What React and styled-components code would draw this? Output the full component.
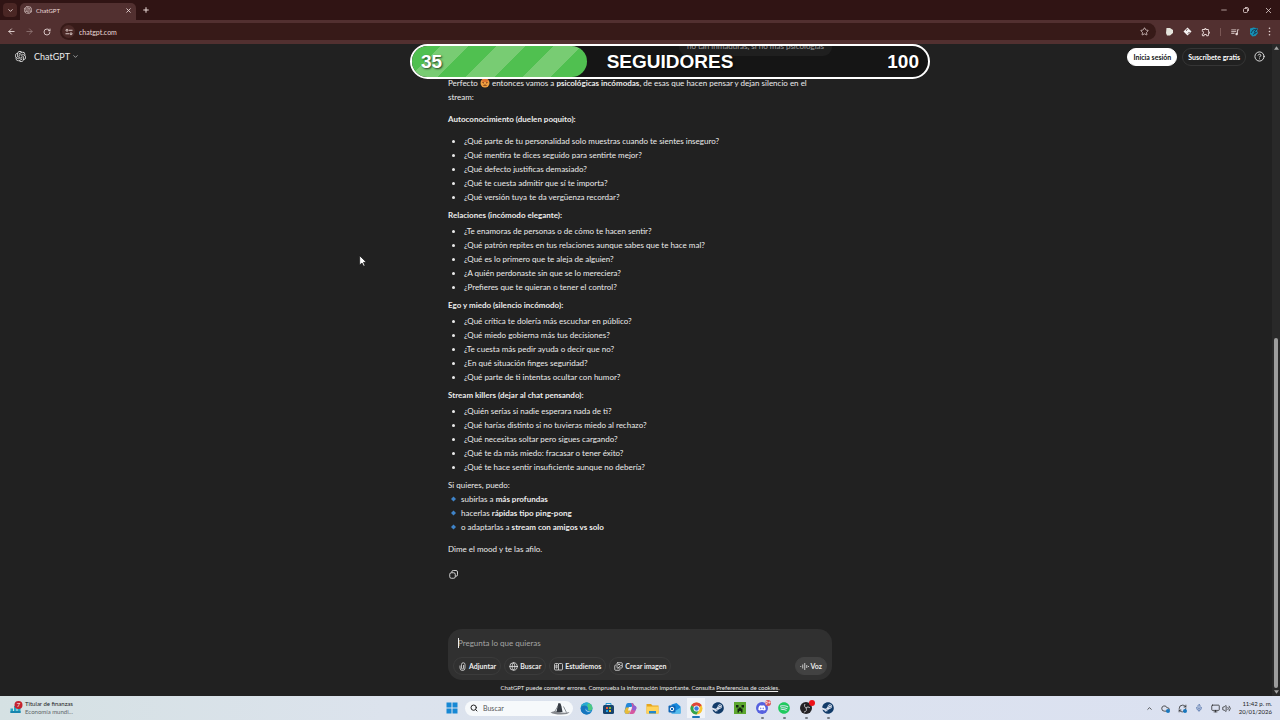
import React from "react";
import styled, { createGlobalStyle } from "styled-components";
import {
  ArrowLeft,
  ArrowRight,
  ChevronDown,
  ChevronUp,
  CircleHelp,
  Cloud,
  Globe,
  Images,
  Mic,
  Minus,
  Monitor,
  Plus,
  RefreshCw,
  RotateCw,
  Search,
  Star,
  Volume2,
  X,
} from "lucide-react";
import { FaDiscord, FaSpotify, FaSteam } from "react-icons/fa";
import { MdOutlineExtension, MdOutlineQueueMusic } from "react-icons/md";
import { SiOpenai } from "react-icons/si";

const firstSection = {
  title: "Autoconocimiento (duelen poquito):",
  items: [
    "¿Qué parte de tu personalidad solo muestras cuando te sientes inseguro?",
    "¿Qué mentira te dices seguido para sentirte mejor?",
    "¿Qué defecto justificas demasiado?",
    "¿Qué te cuesta admitir que sí te importa?",
    "¿Qué versión tuya te da vergüenza recordar?",
  ],
};

const sections = [
  {
    title: "Relaciones (incómodo elegante):",
    items: [
      "¿Te enamoras de personas o de cómo te hacen sentir?",
      "¿Qué patrón repites en tus relaciones aunque sabes que te hace mal?",
      "¿Qué es lo primero que te aleja de alguien?",
      "¿A quién perdonaste sin que se lo mereciera?",
      "¿Prefieres que te quieran o tener el control?",
    ],
  },
  {
    title: "Ego y miedo (silencio incómodo):",
    items: [
      "¿Qué crítica te dolería más escuchar en público?",
      "¿Qué miedo gobierna más tus decisiones?",
      "¿Te cuesta más pedir ayuda o decir que no?",
      "¿En qué situación finges seguridad?",
      "¿Qué parte de ti intentas ocultar con humor?",
    ],
  },
  {
    title: "Stream killers (dejar al chat pensando):",
    items: [
      "¿Quién serías si nadie esperara nada de ti?",
      "¿Qué harías distinto si no tuvieras miedo al rechazo?",
      "¿Qué necesitas soltar pero sigues cargando?",
      "¿Qué te da más miedo: fracasar o tener éxito?",
      "¿Qué te hace sentir insuficiente aunque no debería?",
    ],
  },
];

const offers = [
  ["subirlas a ", "más profundas"],
  ["hacerlas ", "rápidas tipo ping-pong"],
  ["o adaptarlas a ", "stream con amigos vs solo"],
];

function App() {
  return (
    <>
      <GlobalStyle />
      <Screen>
        <TabStrip />
        <Toolbar />
        <ChatPage />
        <Taskbar />
        <FollowerGoal />
        <Cursor />
      </Screen>
    </>
  );
}

// Browser tabs
function TabStrip() {
  return (
    <TabBar>
      <TabSearch aria-label="Buscar pestañas">
        <ChevronDown size={7} strokeWidth={3} />
      </TabSearch>
      <Tab>
        <SiOpenai size={8} />
        <TabTitle>ChatGPT</TabTitle>
        <PlainButton aria-label="Cerrar pestaña">
          <X size={7} strokeWidth={3} />
        </PlainButton>
      </Tab>
      <PlainButton aria-label="Nueva pestaña">
        <Plus size={8} strokeWidth={3} />
      </PlainButton>
      <WindowControls>
        <PlainButton aria-label="Minimizar">
          <Minus size={8} strokeWidth={2} />
        </PlainButton>
        <PlainButton aria-label="Restaurar">
          <svg width="6" height="6" viewBox="0 0 12 12" fill="none" stroke="currentColor" strokeWidth="1.6">
            <rect x="1" y="3" width="8" height="8" rx="2" />
            <path d="M4 1h4a3 3 0 0 1 3 3v4" />
          </svg>
        </PlainButton>
        <PlainButton aria-label="Cerrar">
          <X size={9} strokeWidth={2} />
        </PlainButton>
      </WindowControls>
    </TabBar>
  );
}

// Navigation, address and extensions
function Toolbar() {
  return (
    <ToolBar>
      <NavButtons>
        <PlainButton aria-label="Atrás">
          <ArrowLeft size={9} strokeWidth={2.4} />
        </PlainButton>
        <PlainButton aria-label="Adelante" $dim>
          <ArrowRight size={9} strokeWidth={2.4} />
        </PlainButton>
        <PlainButton aria-label="Recargar">
          <RotateCw size={8} strokeWidth={2.6} />
        </PlainButton>
      </NavButtons>
      <AddressBar>
        <SiteInfo aria-label="Información del sitio">
          <svg width="8" height="8" viewBox="0 0 16 16" fill="none" stroke="currentColor" strokeWidth="1.8">
            <circle cx="4" cy="4.5" r="2" />
            <path d="M8 4.5h7M1 11.5h7" />
            <circle cx="12" cy="11.5" r="2" />
          </svg>
        </SiteInfo>
        <AddressInput aria-label="Dirección" defaultValue="chatgpt.com" />
        <PlainButton aria-label="Favoritos">
          <Star size={9} strokeWidth={2} />
        </PlainButton>
      </AddressBar>
      <Extensions>
        <svg width="9" height="9" viewBox="0 0 18 18" fill="#e5e4dc">
          <path d="M3 2h7l6 4v6l-6 5H4L2 12z" />
        </svg>
        <svg width="9" height="9" viewBox="0 0 18 18" fill="#f5f2f2">
          <path d="M9 1l8 8-8 8-8-8z" />
          <path d="M6 7l3-2M10 13l3-3" stroke="#4b2a2a" strokeWidth="2" />
        </svg>
        <MdOutlineExtension size={10} />
        <Divider />
        <MdOutlineQueueMusic size={10} />
        <svg width="10" height="10" viewBox="0 0 20 20">
          <path d="M2 3l7-2 9 2-2 5 2 4-5 6-6 1-5-5z" fill="#1590b4" />
          <path d="M4 12l4-6 8-2-6 6 5 1-7 4" fill="none" stroke="#163d57" strokeWidth="2" />
        </svg>
        <svg width="3" height="9" viewBox="0 0 3 9" fill="currentColor">
          <circle cx="1.5" cy="1.3" r=".8" />
          <circle cx="1.5" cy="4.5" r=".8" />
          <circle cx="1.5" cy="7.7" r=".8" />
        </svg>
      </Extensions>
    </ToolBar>
  );
}

function Section({ title, items, spaced }) {
  return (
    <>
      <SectionTitle $spaced={spaced}>{title}</SectionTitle>
      <Questions>
        {items.map((item) => (
          <li key={item}>{item}</li>
        ))}
      </Questions>
    </>
  );
}

function ChatPage() {
  return (
    <Page>
      <Header>
        <ModelButton>
          <SiOpenai size={11} />
          <span>ChatGPT</span>
          <ChevronDown size={7} strokeWidth={2} />
        </ModelButton>
        <Account>
          <Pill $light>Inicia sesión</Pill>
          <Pill>Suscríbete gratis</Pill>
          <HelpButton aria-label="Ayuda">
            <CircleHelp size={11} strokeWidth={2} />
          </HelpButton>
        </Account>
      </Header>

      <Thread>
        <UserMessage>no tan inmaduras, si no mas psicologías</UserMessage>
        <Paragraph>
          Perfecto <Face /> entonces vamos a <b>psicológicas incómodas</b>, de esas que hacen
          pensar y dejan silencio en el stream:
        </Paragraph>
        <Section {...firstSection} spaced />
        {sections.map((section) => (
          <Section key={section.title} {...section} />
        ))}
        <Closing>
          Si quieres, puedo:
          {offers.map(([text, strong]) => (
            <Offer key={strong}>
              <svg width="11" height="8" viewBox="0 0 11 8">
                <path d="M5.500 1.500l2.500 2.500-2.500 2.500L3 4z" fill="#3f83c8" />
              </svg>
              <span>
                {text}
                <b>{strong}</b>
              </span>
            </Offer>
          ))}
        </Closing>
        <Paragraph>Dime el mood y te las afilo.</Paragraph>
        <CopyButton aria-label="Copiar">
          <svg width="9" height="9" viewBox="0 0 18 18" fill="none" stroke="currentColor" strokeWidth="1.7">
            <rect x="1.500" y="5.500" width="11" height="11" rx="3" />
            <path d="M5.500 5V4a3 3 0 0 1 3-3H14a3 3 0 0 1 3 3v5.500a3 3 0 0 1-3 3h-1" />
          </svg>
        </CopyButton>
      </Thread>

      <Composer>
        <Prompt aria-label="Mensaje" placeholder="Pregunta lo que quieras" />
        <Caret />
        <Actions>
          <ActionButton>
            <svg width="9" height="9" viewBox="0 0 18 18" fill="none" stroke="currentColor" strokeWidth="1.5">
              <path d="M4 7v5a5 5 0 0 0 10 0V5a3.500 3.500 0 0 0-7 0v7a2 2 0 0 0 4 0V6" />
            </svg>
            Adjuntar
          </ActionButton>
          <ActionButton>
            <Globe size={9} /> Buscar
          </ActionButton>
          <ActionButton>
            <svg width="9" height="9" viewBox="0 0 18 18" fill="none" stroke="currentColor" strokeWidth="1.5">
              <path d="M9 4v12H3a2 2 0 0 1-2-2V5a2 2 0 0 1 2-2h4q2 0 2 2 0-2 2-2h4a2 2 0 0 1 2 2v9a2 2 0 0 1-2 2H9" />
              <path d="M4 6h2v6H4z" />
            </svg>
            Estudiemos
          </ActionButton>
          <ActionButton>
            <Images size={9} /> Crear imagen
          </ActionButton>
          <ActionButton $filled>
            <svg width="9" height="9" viewBox="0 0 18 18" stroke="currentColor" strokeWidth="1.6">
              <path d="M1.500 8v2M5.500 5v8M9.500 2v14M13.500 6v6M17 8v2" />
            </svg>
            Voz
          </ActionButton>
        </Actions>
      </Composer>
      <Disclaimer>
        ChatGPT puede cometer errores. Comprueba la información importante. Consulta{" "}
        <a href="#cookies">Preferencias de cookies</a>.
      </Disclaimer>

      <ScrollTrack>
        <ScrollArrow viewBox="0 0 6 4">
          <path d="M3 0l3 4H0z" />
        </ScrollArrow>
        <ScrollThumb />
        <ScrollArrow viewBox="0 0 6 4">
          <path d="M0 0h6L3 4z" />
        </ScrollArrow>
      </ScrollTrack>
    </Page>
  );
}

function Face() {
  return (
    <FaceIcon viewBox="0 0 20 20">
      <circle cx="10" cy="10" r="9" fill="#f0a040" />
      <path d="M3 5a9 9 0 0 1 14 0l-3 3H6z" fill="#dd7430" />
      <path d="M5 9l3 1M15 9l-3 1M7 15q3-2 6 0" stroke="#6d2f15" strokeWidth="2" fill="none" />
    </FaceIcon>
  );
}

// Stream overlay with the follower goal
function FollowerGoal() {
  return (
    <Goal>
      <GoalFill />
      <GoalText>35</GoalText>
      <GoalText>SEGUIDORES</GoalText>
      <GoalText>100</GoalText>
    </Goal>
  );
}

function Cursor() {
  return (
    <Pointer viewBox="0 0 12 18">
      <path d="M1 1v14l3.500-3 2.500 5 2-1-2.300-5H11z" fill="#fff" stroke="#111" />
    </Pointer>
  );
}

// Windows taskbar
function Taskbar() {
  return (
    <TaskBar>
      <News>
        <svg width="14" height="14" viewBox="0 0 28 28">
          <path d="M3 15h5v9H3zM10 10h5v14h-5zM17 14h6v10h-6z" fill="#25a7c4" />
          <path d="M3 20h20v4H3z" fill="#1785ae" />
          <circle cx="19" cy="8" r="8" fill="#c4242f" />
          <text x="19" y="12" fontSize="12" textAnchor="middle" fill="#fff">7</text>
        </svg>
        <NewsText>
          <span>Titular de finanzas</span>
          <small>Economía mundi...</small>
        </NewsText>
      </News>
      <Apps>
        <AppButton aria-label="Inicio">
          <svg width="12" height="12" viewBox="0 0 24 24" fill="#1688d4">
            <path d="M1 1h10v10H1zM13 1h10v10H13zM1 13h10v10H1zM13 13h10v10H13z" />
          </svg>
        </AppButton>
        <SearchBox>
          <Search size={8} strokeWidth={3} />
          <input aria-label="Buscar" placeholder="Buscar" />
          <svg width="20" height="13" viewBox="0 0 40 26">
            <path d="M1 21q9-4 18-1t20 0q-2 5-17 5-14 0-21-4z" fill="#85888d" />
            <path d="M13 20l2-11 2-7 4 1 2 6 2 11z" fill="#333941" />
            <path d="M9 20l7-12M27 9l6 12" stroke="#6b7178" strokeWidth="1.500" />
          </svg>
        </SearchBox>
        <AppButton aria-label="Edge">
          <svg width="13" height="13" viewBox="0 0 26 26">
            <circle cx="13" cy="13" r="12" fill="#1684cf" />
            <path d="M2 9C6-2 24-1 25 12c0 6-8 7-9 3 2-8-9-9-14-6z" fill="#4bc983" />
            <path d="M2 9C5 0 15-1 20 3c-6-1-6 3-4 8-4-5-10-5-14-2z" fill="#27a9d6" />
            <path d="M3 9c7-5 13 0 12 4-5-3-7 3-2 7 4 3 8 2 10 0-4 7-17 7-21-3z" fill="#1675bd" />
            <path d="M12 13c-1 4 4 7 11 5-5 3-14 1-11-5z" fill="#dce5ee" />
          </svg>
        </AppButton>
        <AppButton aria-label="Microsoft Store">
          <svg width="13" height="13" viewBox="0 0 26 26">
            <path d="M8 7V3h10v4" fill="none" stroke="#2394cf" strokeWidth="2" />
            <rect x="2" y="6" width="22" height="18" rx="3" fill="#18446f" />
            <path d="M8 10h4v4H8z" fill="#ee5a35" />
            <path d="M14 10h4v4h-4z" fill="#82b92e" />
            <path d="M8 16h4v4H8z" fill="#22a4e7" />
            <path d="M14 16h4v4h-4z" fill="#f5b721" />
          </svg>
        </AppButton>
        <AppButton aria-label="Copilot">
          <svg width="13" height="13" viewBox="0 0 26 26">
            <path d="M8 2h8q3 0 4 4l1 3h-6l-4 12q-1 3-5 3-5 0-5-6l3-12q1-4 4-4z" fill="#2387d9" />
            <path d="M4 11l-3 7q0 6 5 6t6-5l2-8z" fill="#e8bb3a" />
            <path d="M16 2q3 0 4 5h1q4 1 4 5l-3 8q-1 4-5 4H9q3-1 4-5l3-9q1-4-2-8z" fill="#d657a0" />
            <path d="M18 7h3q4 1 4 5l-2 5-7-1z" fill="#8b62d4" />
            <path d="M10 10h6l-2 7H8z" fill="#eef1f5" />
          </svg>
        </AppButton>
        <AppButton aria-label="Explorador de archivos">
          <svg width="13" height="13" viewBox="0 0 26 26">
            <path d="M1 4h9l3 3h12v16H1z" fill="#e5a51d" />
            <path d="M1 9h24v14H1z" fill="#ffd35b" />
            <path d="M6 18h14v5H6z" fill="#2286cb" />
          </svg>
        </AppButton>
        <AppButton aria-label="Outlook">
          <svg width="13" height="13" viewBox="0 0 26 26">
            <path d="M7 5l10-3 8 7v14H7z" fill="#1789dc" />
            <path d="M8 12l8 5 9-6v12H8z" fill="#53bced" />
            <rect x="1" y="7" width="14" height="14" rx="2" fill="#0d63b3" />
            <circle cx="8" cy="14" r="3.500" fill="none" stroke="#fff" strokeWidth="2" />
          </svg>
        </AppButton>
        <AppButton aria-label="Chrome" $active>
          <svg width="13" height="13" viewBox="0 0 26 26">
            <circle cx="13" cy="13" r="12" fill="#f7c634" />
            <path d="M13 13L2.600 7A12 12 0 0 1 23.400 7z" fill="#df453a" />
            <path d="M13 13L2.600 7A12 12 0 0 0 13 25l5-9z" fill="#31a350" />
            <circle cx="13" cy="13" r="6" fill="#fff" />
            <circle cx="13" cy="13" r="4.500" fill="#3d7de0" />
          </svg>
        </AppButton>
        <AppButton aria-label="Steam">
          <FaSteam size={12} color="#123b69" />
        </AppButton>
        <AppButton aria-label="Minecraft">
          <svg width="12" height="12" viewBox="0 0 24 24">
            <path d="M0 0h24v24H0z" fill="#5da72f" />
            <path d="M4 6h5v5H4zM15 6h5v5h-5zM10 11h4v2h3v8h-3v-3h-4v3H7v-8h3z" fill="#142611" />
          </svg>
        </AppButton>
        <AppButton aria-label="Discord" $running>
          <RoundIcon>
            <FaDiscord size={8} />
          </RoundIcon>
          <Badge>9+</Badge>
        </AppButton>
        <AppButton aria-label="Spotify" $running>
          <FaSpotify size={12} color="#20ca5e" />
        </AppButton>
        <AppButton aria-label="OBS Studio" $running>
          <svg width="12" height="12" viewBox="0 0 24 24">
            <circle cx="12" cy="12" r="12" fill="#242225" />
            <path
              d="M10 4a5 5 0 0 0 3 8M20 12a5 5 0 0 0-8 0M8 20a5 5 0 0 0 4-8"
              fill="none"
              stroke="#bdbcc0"
              strokeWidth="2"
            />
          </svg>
          <Badge $dot />
        </AppButton>
        <AppButton aria-label="Steam" $running>
          <FaSteam size={12} color="#123b69" />
        </AppButton>
      </Apps>
      <Tray>
        <ChevronUp size={7} strokeWidth={2.500} />
        <TrayIcon>
          <Cloud size={9} />
        </TrayIcon>
        <TrayIcon>
          <RefreshCw size={9} />
        </TrayIcon>
        <Mic size={8} color="#355a9b" />
        <TrayPair>
          <Monitor size={9} />
          <Volume2 size={9} />
        </TrayPair>
        <Clock>
          <span>11:42 p. m.</span>
          <span>20/01/2026</span>
        </Clock>
      </Tray>
    </TaskBar>
  );
}

const GlobalStyle = createGlobalStyle`
  * {
    box-sizing: border-box;
  }
  body {
    margin: 0;
    background: #212121;
    font-family: Lato, "Noto Sans", sans-serif;
  }
  button,
  input {
    font-family: inherit;
    border: 0;
    padding: 0;
    background: none;
    color: inherit;
    outline: none;
  }
  svg {
    flex: none;
  }
  b {
    font-weight: 700;
  }
`;

const Screen = styled.div`
  position: relative;
  display: flex;
  flex-direction: column;
  height: 100vh;
  overflow: hidden;
`;

const PlainButton = styled.button`
  display: flex;
  align-items: center;
  justify-content: center;
  opacity: ${(props) => (props.$dim ? 0.4 : 1)};
`;

// Tab strip
const TabBar = styled.div`
  display: flex;
  align-items: center;
  height: 20px;
  flex: none;
  padding-left: 3px;
  background: #301414;
  color: #eddcda;
`;

const TabSearch = styled(PlainButton)`
  width: 14px;
  height: 14px;
  border-radius: 4px;
  background: #4a2624;
`;

const Tab = styled.div`
  display: flex;
  align-items: center;
  align-self: flex-end;
  gap: 4px;
  width: 116px;
  height: 17px;
  margin: 0 6px 0 3px;
  padding: 0 4px 3px;
  border-radius: 5px 5px 0 0;
  background: #523030;
`;

const TabTitle = styled.span`
  flex: 1;
  font-size: 6px;
`;

const WindowControls = styled.div`
  display: flex;
  gap: 15px;
  margin-left: auto;
  padding-right: 7px;
`;

// Toolbar
const ToolBar = styled.div`
  display: flex;
  align-items: center;
  height: 24px;
  flex: none;
  padding: 0 9px 1px 7px;
  background: #523030;
  color: #e8d8d6;
`;

const NavButtons = styled.div`
  display: flex;
  gap: 9px;
  width: 53px;
`;

const AddressBar = styled.div`
  display: flex;
  align-items: center;
  flex: 1;
  gap: 4px;
  height: 17px;
  padding: 0 7px 0 2px;
  border-radius: 9px;
  background: #371a18;
`;

const SiteInfo = styled(PlainButton)`
  width: 13px;
  height: 13px;
  border-radius: 50%;
  background: #4b2927;
`;

const AddressInput = styled.input`
  flex: 1;
  min-width: 0;
  font-size: 7px;
`;

const Extensions = styled.div`
  display: flex;
  align-items: center;
  gap: 9px;
  margin-left: 9px;
`;

const Divider = styled.span`
  width: 1px;
  height: 8px;
  background: #7a5755;
`;

// Chat page
const Page = styled.main`
  position: relative;
  display: flex;
  flex-direction: column;
  flex: 1;
  min-height: 0;
  overflow: hidden;
  background: #212121;
  color: #ececec;
`;

const Header = styled.header`
  position: absolute;
  top: 0;
  left: 0;
  right: 0;
  display: flex;
  align-items: center;
  justify-content: space-between;
  height: 25px;
  padding: 0 15px;
`;

const ModelButton = styled.button`
  display: flex;
  align-items: center;
  gap: 2px;
  font-size: 9px;
  span {
    margin-left: 6px;
  }
`;

const Account = styled.div`
  display: flex;
  align-items: center;
  gap: 5px;
`;

const Pill = styled.button`
  height: 18px;
  padding: 0 5px;
  border: 1px solid ${(props) => (props.$light ? "#fff" : "#353535")};
  border-radius: 9px;
  background: ${(props) => (props.$light ? "#fff" : "transparent")};
  color: ${(props) => (props.$light ? "#111" : "#fff")};
  font-size: 7px;
  font-weight: 700;
`;

const HelpButton = styled(PlainButton)`
  margin-left: 3px;
`;

const Thread = styled.section`
  display: flex;
  flex-direction: column;
  justify-content: flex-end;
  flex: 1;
  min-height: 0;
  width: 384px;
  margin: 0 auto;
  padding-bottom: 50px;
  font-size: 8px;
  line-height: 14px;
`;

const UserMessage = styled.div`
  align-self: flex-end;
  margin-bottom: 20px;
  padding: 4px 8px 3px;
  border-radius: 9px;
  background: #303030;
`;

const Paragraph = styled.p`
  margin: 0;
`;

const FaceIcon = styled.svg`
  width: 10px;
  height: 10px;
  vertical-align: -2px;
`;

const SectionTitle = styled.h3`
  margin: ${(props) => (props.$spaced ? "8px 0" : "4px 0 2px")};
  font-size: 8px;
  font-weight: 700;
`;

const Questions = styled.ul`
  margin: 0;
  padding-left: 16px;
`;

const Closing = styled.div`
  margin: 4px 0 8px;
`;

const Offer = styled.div`
  display: flex;
  align-items: center;
  gap: 2px;
`;

const CopyButton = styled(PlainButton)`
  width: 10px;
  height: 10px;
  margin-top: 14px;
`;

const Composer = styled.form`
  position: relative;
  display: flex;
  flex-direction: column;
  justify-content: space-between;
  width: 384px;
  height: 51px;
  flex: none;
  margin: 0 auto;
  padding: 8px 5px 5px;
  border-radius: 14px;
  background: #303030;
`;

const Prompt = styled.input`
  height: 12px;
  padding: 0 5px;
  font-size: 8px;
  &::placeholder {
    color: #a5a5a5;
    opacity: 1;
  }
`;

const Caret = styled.span`
  position: absolute;
  top: 9px;
  left: 10px;
  width: 1px;
  height: 10px;
  background: #eee;
`;

const Actions = styled.div`
  display: flex;
  gap: 3px;
`;

const ActionButton = styled.button.attrs({ type: "button" })`
  display: flex;
  align-items: center;
  gap: 2px;
  height: 18px;
  padding: 0 4px;
  border: 1px solid ${(props) => (props.$filled ? "#424242" : "#3b3b3b")};
  border-radius: 9px;
  background: ${(props) => (props.$filled ? "#424242" : "transparent")};
  font-size: 7px;
  font-weight: 700;
  &:last-child {
    margin-left: auto;
  }
`;

const Disclaimer = styled.p`
  flex: none;
  height: 16px;
  margin: 0;
  font-size: 6px;
  line-height: 16px;
  text-align: center;
  a {
    color: inherit;
  }
`;

const ScrollTrack = styled.div`
  position: absolute;
  top: 0;
  right: 0;
  bottom: 0;
  display: flex;
  flex-direction: column;
  align-items: center;
  justify-content: space-between;
  width: 8px;
  padding: 2px 0;
  background: #292929;
`;

const ScrollArrow = styled.svg`
  width: 5px;
  height: 4px;
  fill: #a5a5a5;
`;

const ScrollThumb = styled.div`
  width: 4px;
  height: 54%;
  margin-top: auto;
  margin-bottom: 2px;
  border-radius: 2px;
  background: #9c9c9c;
`;

// Follower goal
const Goal = styled.div`
  position: absolute;
  top: 44px;
  left: calc(50% + 30px);
  transform: translateX(-50%);
  display: grid;
  grid-template-columns: 1fr auto 1fr;
  align-items: center;
  width: 520px;
  height: 35px;
  padding: 0 9px;
  border: 2px solid #fff;
  border-radius: 18px;
  background: rgba(0, 0, 0, 0.35);
`;

const GoalFill = styled.div`
  position: absolute;
  inset: 0 auto 0 0;
  width: 34%;
  border-radius: 16px;
  background: repeating-linear-gradient(135deg, #50c050 0 20px, #78cc73 20px 40px);
`;

const GoalText = styled.strong`
  position: relative;
  color: #fff;
  font-family: "Liberation Sans", sans-serif;
  font-size: 19px;
  line-height: 20px;
  text-shadow: 1px 1px 2px rgba(0, 0, 0, 0.7);
  &:last-child {
    text-align: right;
  }
`;

const Pointer = styled.svg`
  position: absolute;
  top: 255px;
  left: 359px;
  width: 8px;
  height: 12px;
`;

// Taskbar
const TaskBar = styled.footer`
  display: grid;
  grid-template-columns: 1fr auto 1fr;
  align-items: center;
  height: 24px;
  flex: none;
  background: linear-gradient(90deg, #d5e1e3, #dce3ed 30%, #dbe1f1);
  color: #222;
`;

const News = styled.div`
  display: flex;
  align-items: center;
  gap: 2px;
  padding-left: 9px;
`;

const NewsText = styled.div`
  display: flex;
  flex-direction: column;
  font-size: 6px;
  line-height: 8px;
  small {
    font-size: 6px;
    color: #5d6468;
  }
`;

const Apps = styled.div`
  display: flex;
  align-items: center;
`;

const AppButton = styled.button`
  position: relative;
  display: flex;
  align-items: center;
  justify-content: center;
  width: 22px;
  height: 24px;
  background: ${(props) =>
    props.$active ? "linear-gradient(#f0f3f8, #f0f3f8) center / 18px 20px no-repeat" : "none"};
  &::after {
    content: "";
    position: absolute;
    bottom: ${(props) => (props.$active ? 2 : 1)}px;
    width: ${(props) => (props.$active ? 8 : props.$running ? 3 : 0)}px;
    height: 2px;
    border-radius: 1px;
    background: ${(props) => (props.$active ? "#1b72b8" : "#767b84")};
  }
`;

const SearchBox = styled.label`
  display: flex;
  align-items: center;
  gap: 5px;
  width: 108px;
  height: 15px;
  margin: 0 2px;
  padding: 0 3px 0 5px;
  border-radius: 8px;
  background: #f6f9fb;
  input {
    flex: 1;
    min-width: 0;
    font-size: 7px;
  }
  input::placeholder {
    color: #555;
    opacity: 1;
  }
`;

const RoundIcon = styled.span`
  display: flex;
  align-items: center;
  justify-content: center;
  width: 12px;
  height: 12px;
  border-radius: 50%;
  background: #5661df;
  color: #fff;
`;

const Badge = styled.span`
  position: absolute;
  top: 4px;
  right: 2px;
  min-width: 6px;
  height: 6px;
  border-radius: 3px;
  background: ${(props) => (props.$dot ? "#ed1118" : "#d95360")};
  color: #fff;
  font-size: 5px;
  line-height: 6px;
`;

const Tray = styled.div`
  display: flex;
  align-items: center;
  justify-content: flex-end;
  gap: 8px;
  padding-right: 8px;
`;

const TrayIcon = styled.span`
  position: relative;
  display: flex;
  &::after {
    content: "";
    position: absolute;
    right: 0;
    bottom: 0;
    width: 4px;
    height: 4px;
    border-radius: 50%;
    background: #1877bd;
  }
`;

const TrayPair = styled.span`
  display: flex;
  gap: 2px;
`;

const Clock = styled.time`
  display: flex;
  flex-direction: column;
  align-items: flex-end;
  font-size: 6px;
  line-height: 8px;
`;

export default App;
